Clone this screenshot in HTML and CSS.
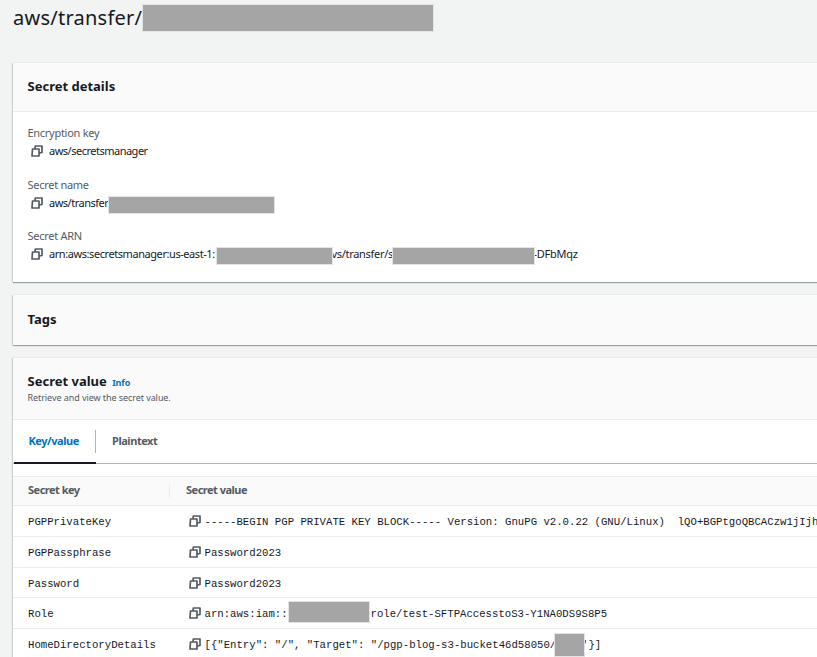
FILE: index.html
```html
<!DOCTYPE html>
<html lang="en">
<head>
    <meta charset="UTF-8"/>
    <title>Secrets Manager</title>
    <meta name="viewport" content="width=device-width, initial-scale=1"/>
    <link rel="stylesheet" href="styles.css">
</head>
<body>
<svg class="sprite" width="0" height="0">
    <symbol id="copy" viewBox="0 0 12 12">
        <path d="M1.500 4h6.500v7H1zM4 3.500L4.300 1H11v6.500L8.500 8" fill="none" stroke="currentColor" stroke-width="1.700" stroke-linejoin="round"/>
    </symbol>
</svg>

<h1 class="page-title"><span class="title-text">aws/transfer/</span><span class="mask mask-title"></span></h1>

<section class="card details">
    <div class="card-header"><h2><span>Secret details</span></h2></div>
    <div class="card-body">
        <div class="field">
            <div class="label"><span>Encryption key</span></div>
            <div class="value"><svg class="icon"><use href="#copy"/></svg><span class="v-key">aws/secretsmanager</span></div>
        </div>
        <div class="field">
            <div class="label"><span>Secret name</span></div>
            <div class="value"><svg class="icon"><use href="#copy"/></svg><span class="v-name">aws/transfer</span><span class="mask mask-name"></span></div>
        </div>
        <div class="field">
            <div class="label"><span>Secret ARN</span></div>
            <div class="value"><svg class="icon"><use href="#copy"/></svg><span class="v-arn">arn:aws:secretsmanager:us-east-1:</span><span class="mask mask-arn"></span><span class="v-path">vs/transfer/s</span><span class="mask mask-id"></span><span class="v-end">-DFbMqz</span></div>
        </div>
    </div>
</section>

<section class="card tags">
    <div class="card-header"><h2><span>Tags</span></h2></div>
</section>

<section class="card secret">
    <div class="card-header tall">
        <h2><span>Secret value</span> <a class="info">Info</a></h2>
        <p class="description"><span>Retrieve and view the secret value.</span></p>
    </div>
    <div class="tabs">
        <div class="tab active"><span>Key/value</span></div>
        <div class="tab"><span>Plaintext</span></div>
    </div>
    <div class="table">
        <div class="row head"><div class="key"><span>Secret key</span></div><div class="val"><span>Secret value</span></div></div>
        <div class="row">
            <div class="key">PGPPrivateKey</div>
            <div class="val"><svg class="icon"><use href="#copy"/></svg><span>-----BEGIN PGP PRIVATE KEY BLOCK----- Version: GnuPG v2.0.22 (GNU/Linux)  lQO+BGPtgoQBCACzw1jIjh</span></div>
        </div>
        <div class="row">
            <div class="key">PGPPassphrase</div>
            <div class="val"><svg class="icon"><use href="#copy"/></svg><span>Password2023</span></div>
        </div>
        <div class="row">
            <div class="key">Password</div>
            <div class="val"><svg class="icon"><use href="#copy"/></svg><span>Password2023</span></div>
        </div>
        <div class="row">
            <div class="key">Role</div>
            <div class="val"><svg class="icon"><use href="#copy"/></svg><span class="v-role">arn:aws:iam::</span><span class="mask mask-role"></span><span>role/test-SFTPAccesstoS3-Y1NA0DS9S8P5</span></div>
        </div>
        <div class="row">
            <div class="key">HomeDirectoryDetails</div>
            <div class="val"><svg class="icon"><use href="#copy"/></svg><span class="v-home">[{"Entry": "/", "Target": "/pgp-blog-s3-bucket46d58050/</span><span class="mask mask-home"></span><span class="v-tail">'}]</span></div>
        </div>
    </div>
</section>
</body>
</html>
```
FILE: styles.css
```css
* {
    box-sizing: border-box;
}

body {
    margin: 0;
    height: 657px;
    padding-left: 13px;
    overflow: hidden;
    background: #f2f3f3;
    color: #16191f;
    font-family: "Noto Sans", sans-serif;
    font-size: 11px;
}

h1, h2, p {
    margin: 0;
}

.sprite {
    position: absolute;
}

.page-title {
    display: flex;
    height: 63px;
    font-size: 20px;
    font-weight: 400;
    line-height: 36px;
}

.title-text {
    width: 130px;
    white-space: nowrap;
    letter-spacing: 0.25px;
}

/* grey boxes over private values */
.mask {
    flex: none;
    background: #a5a5a5;
    box-shadow: 0 0 0 1px #e4e4e4;
    position: relative;
}

.mask-title {
    width: 290px;
    height: 26px;
    margin-top: 5px;
}

.card {
    width: 830px;
    margin-bottom: 13px;
    background: #fff;
    box-shadow: 0 1px 1px #95a1a3, -1px 0 1px #d5dadb, 0 -1px 0 #eaeded;
}

.card-header {
    height: 49px;
    padding: 0 14.5px;
    background: #fafafa;
    border-bottom: 1px solid #eaeded;
}

h2 {
    font-size: 13px;
    font-weight: 700;
    line-height: 46px;
    letter-spacing: 0;
}

.details {
    height: 219px;
}

.card-body {
    padding: 12px 14.500px 0;
}

.field {
    height: 51.700px;
}

.label {
    height: 17px;
    color: #545b64;
    line-height: 17px;
    letter-spacing: -0.28px;
}

.value {
    display: flex;
    align-items: center;
    height: 20px;
    padding-left: 3px;
    line-height: 20px;
    letter-spacing: -0.5px;
    white-space: nowrap;
}

.icon {
    flex: none;
    width: 12px;
    height: 12px;
    margin-right: 6.500px;
    color: #545b64;
}

.value span {
    flex: none;
}

.v-name {
    width: 60px;
}

.mask-name {
    width: 165px;
    height: 16px;
    top: 2px;
}

.v-arn {
    width: 167.500px;
    letter-spacing: -0.43px;
}

.mask-arn {
    width: 115px;
    height: 16px;
    top: 2px;
}

.v-path {
    width: 61px;
    letter-spacing: -0.3px;
}

.mask-id {
    width: 141px;
    height: 16px;
    top: 2px;
}

.v-end {
    letter-spacing: -0.25px;
}

.tags {
    height: 50px;
}

.tags .card-header {
    height: 50px;
    border-bottom: 0;
    padding-top: 1px;
}

.tall {
    height: 62px;
}

.tall h2 {
    height: 32px;
    line-height: 46px;
}

.info {
    margin-left: 2px;
    color: #0073bb;
    font-size: 9px;
    letter-spacing: -0.1px;
}

.description {
    color: #545b64;
    font-size: 9px;
    line-height: 16px;
    letter-spacing: -0.07px;
}

.tabs {
    display: flex;
    height: 44px;
    padding-left: 1px;
    border-bottom: 1px solid #aab7b8;
}

.tab {
    height: 44px;
    padding-left: 17px;
    color: #545b64;
    font-weight: 700;
    line-height: 41px;
    letter-spacing: -0.45px;
}

.tab.active {
    width: 82px;
    padding-left: 14.500px;
    border-bottom: 2px solid #16191f;
    background: linear-gradient(#aab7b8, #aab7b8) right 10px / 1px 23px no-repeat;
    color: #0073bb;
}

.tab.active + .tab {
    padding-left: 16px;
}

.table {
    margin-top: 12px;
    border-top: 1px solid #eaeded;
}

.row {
    display: flex;
    height: 30.800px;
    border-bottom: 1px solid #eaeded;
    font-family: "Liberation Mono", monospace;
    font-size: 10.667px;
    line-height: 32px;
}

.key {
    flex: none;
    width: 157px;
    padding-left: 15px;
}

.val {
    display: flex;
    align-items: flex-start;
    padding-left: 19px;
    white-space: pre;
}

.val .icon {
    margin: 9px 3.500px 0 0;
}

.row.head {
    height: 29px;
    background: #fafafa;
    color: #545b64;
    font-family: "Noto Sans", sans-serif;
    font-size: 11px;
    font-weight: 700;
    line-height: 26px;
    letter-spacing: -0.5px;
}

.head .key {
    background: linear-gradient(#eaeded, #eaeded) right 7px / 1px 14px no-repeat;
}

.head .val {
    padding-left: 16px;
}

.v-role {
    width: 84.500px;
}

.mask-role {
    width: 80px;
    height: 20px;
    margin-right: 1.500px;
    top: 4px;
}

.v-home {
    width: 350.500px;
}

.mask-home {
    width: 29px;
    height: 22px;
    top: 5px;
}

.v-tail {
    margin-left: -2px;
}
```
